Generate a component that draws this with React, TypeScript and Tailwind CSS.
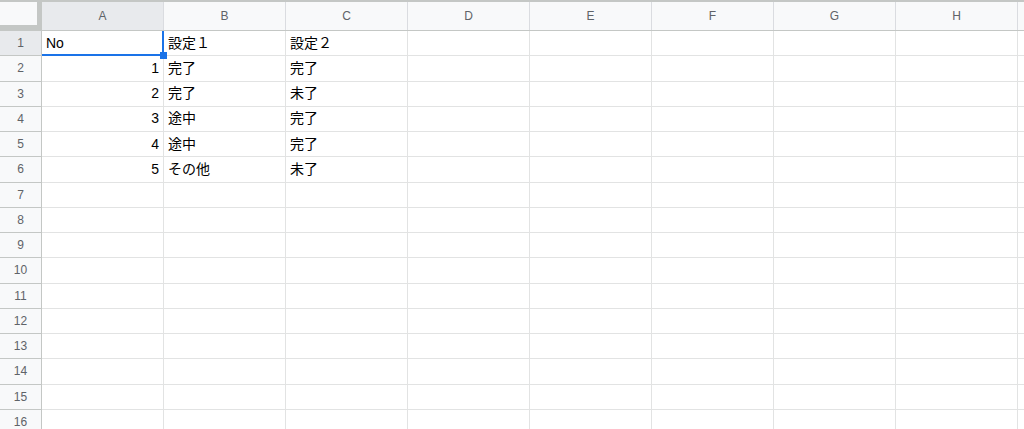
import React from 'react'

const columns = ['A', 'B', 'C', 'D', 'E', 'F', 'G', 'H', '']

// values for the first few rows, [A, B, C]
const data: (string | number)[][] = [
  ['No', '設定１', '設定２'],
  [1, '完了', '完了'],
  [2, '完了', '未了'],
  [3, '途中', '完了'],
  [4, '途中', '完了'],
  [5, 'その他', '未了'],
]

const font = { fontFamily: '"Liberation Sans", Arial, "Noto Sans CJK JP", sans-serif' }

export default function App() {
  const rows = Array.from({ length: 16 }, (_, i) => i + 1)

  return (
    <div className="w-[1024px] h-[429px] overflow-hidden bg-white border-t-2 border-[#c4c7c5]" style={font}>
      {/* column headers */}
      <div className="flex h-[29px] border-b border-[#c4c7c5]">
        <div className="w-[42px] shrink-0 bg-[#f8f9fa] border-r-[5px] border-b-[5px] border-[#c4c7c5]" />
        {columns.map((c, i) => (
          <div
            key={i}
            className={`w-[122px] shrink-0 flex items-center justify-center text-[12px] text-[#5f6368] border-r border-[#dadce0] ${
              c === 'A' ? 'bg-[#e8eaed]' : 'bg-[#f8f9fa]'
            }`}
          >
            {c}
          </div>
        ))}
      </div>

      {rows.map((r) => {
        const row = data[r - 1]
        return (
          <div key={r} className="flex h-[25.25px]">
            <div
              className={`w-[42px] shrink-0 flex items-center justify-center text-[12px] text-[#5f6368] border-r border-b border-[#c4c7c5] ${
                r === 1 ? 'bg-[#e8eaed]' : 'bg-[#f8f9fa]'
              }`}
            >
              {r}
            </div>
            {columns.map((_, ci) => {
              const v = row ? row[ci] : undefined
              const isNum = typeof v === 'number'
              return (
                <div
                  key={ci}
                  className={`relative w-[122px] shrink-0 flex items-center px-[4px] text-[14px] text-black border-r border-b border-[#e2e3e3] ${
                    isNum ? 'justify-end' : 'justify-start'
                  }`}
                >
                  {v !== undefined && <span>{v}</span>}
                  {r === 1 && ci === 0 && (
                    <>
                      <div className="absolute z-10 left-0 right-[-1px] bottom-[-1px] h-[2px] bg-[#1a73e8]" />
                      <div className="absolute z-10 top-0 bottom-[-1px] right-[-1px] w-[2px] bg-[#1a73e8]" />
                      <div className="absolute z-10 right-[-4px] bottom-[-4px] w-[7px] h-[7px] bg-[#1a73e8]" />
                    </>
                  )}
                </div>
              )
            })}
          </div>
        )
      })}
    </div>
  )
}
